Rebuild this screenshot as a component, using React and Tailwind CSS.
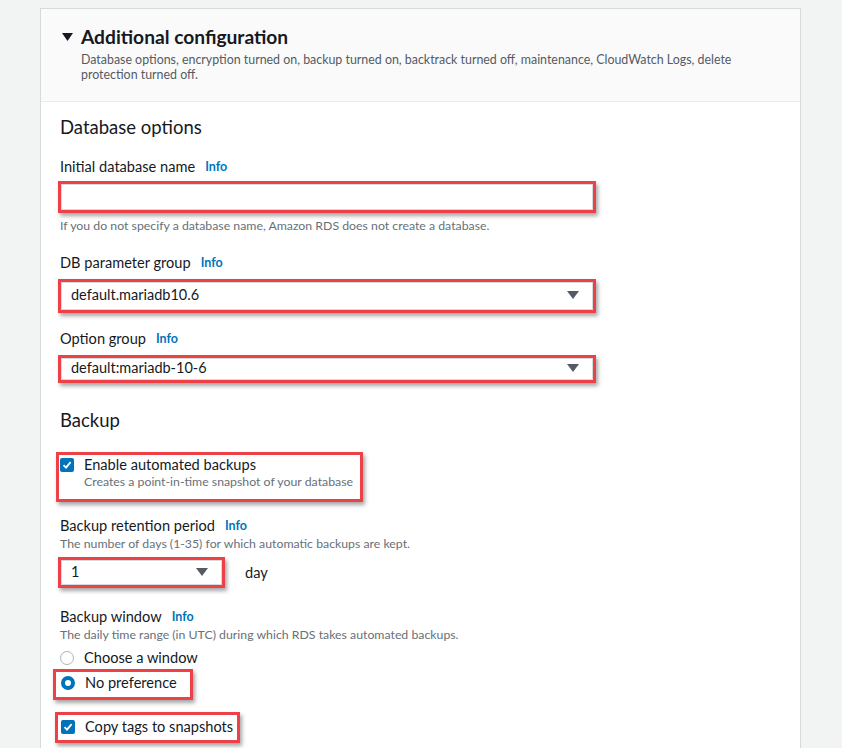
import React from "react";

const RED = "border-[3px] border-[#ee4047] shadow-[2px_3px_4px_rgba(0,0,0,0.35)]";

function Info({ className = "" }) {
  return <span className={"text-[12.5px] font-bold text-[#0073bb] " + className}>Info</span>;
}

function Caret() {
  return (
    <svg width="12" height="8" viewBox="0 0 12 8" className="shrink-0">
      <path d="M0 0 L12 0 L6 8 Z" fill="#545b64" />
    </svg>
  );
}

function Checkbox() {
  return (
    <span className="flex h-[14px] w-[14px] shrink-0 items-center justify-center rounded-[2px] bg-[#0073bb]">
      <svg width="10" height="10" viewBox="0 0 10 10">
        <path d="M1.5 5.2 L4 7.6 L8.6 2.2" fill="none" stroke="white" strokeWidth="1.8" />
      </svg>
    </span>
  );
}

function Radio({ checked }) {
  if (checked) {
    return <span className="h-[14px] w-[14px] shrink-0 rounded-full border-[4px] border-[#0073bb] bg-white" />;
  }
  return <span className="h-[14px] w-[14px] shrink-0 rounded-full border-[1.5px] border-[#aab7b8] bg-white" />;
}

function Select({ value, width, height }) {
  return (
    <div className={"-ml-[2px] " + RED + " " + width + " " + height}>
      <div className="flex h-full items-center justify-between border border-[#d5dbdb] bg-white pb-[2px] pl-[9px] pr-[13px]">
        <span className="text-[14.5px] text-[#16191f]">{value}</span>
        <Caret />
      </div>
    </div>
  );
}

export default function App() {
  return (
    <div className="min-h-[748px] bg-[#f2f3f3] pt-[8px] pl-[40px]" style={{ fontFamily: "Lato, 'Open Sans', sans-serif" }}>
      <div className="h-[740px] w-[761px] border-x border-t border-[#d5dbdb] bg-white">
        {/* header */}
        <div className="h-[93px] border-b border-[#eaeded] bg-[#fafafa] pl-[21px] pt-[16px]">
          <div className="flex items-center gap-[8px]">
            <svg width="11" height="8" viewBox="0 0 11 8">
              <path d="M0 0 L11 0 L5.5 8 Z" fill="#16191f" />
            </svg>
            <span className="text-[19.2px] leading-[24px] font-bold text-[#16191f]">Additional configuration</span>
          </div>
          <p className="ml-[19px] mt-[3px] text-[12.4px] leading-[15px] text-[#545b64]">
            Database options, encryption turned on, backup turned on, backtrack turned off, maintenance, CloudWatch Logs, delete
            <br />
            protection turned off.
          </p>
        </div>

        {/* body */}
        <div className="pl-[19px] pt-[13px] text-[#16191f]">
          <h2 className="text-[18.5px] leading-[24px]">Database options</h2>

          <div className="mt-[18px] flex items-center gap-[10px] text-[14.6px] leading-[20px]">
            Initial database name <Info />
          </div>
          <div className={"mt-[4px] -ml-[2px] h-[32px] w-[538px] " + RED}>
            <div className="h-full border border-[#d5dbdb] bg-white" />
          </div>
          <p className="mt-[5px] text-[12.3px] leading-[16px] text-[#687078]">
            If you do not specify a database name, Amazon RDS does not create a database.
          </p>

          <div className="mt-[19px] flex items-center gap-[10px] text-[14.6px] leading-[20px]">
            DB parameter group <Info />
          </div>
          <div className="mt-[6px]">
            <Select value="default.mariadb10.6" width="w-[538px]" height="h-[34px]" />
          </div>

          <div className="mt-[16px] flex items-center gap-[10px] text-[14.6px] leading-[20px]">
            Option group <Info />
          </div>
          <div className="mt-[6px]">
            <Select value="default:mariadb-10-6" width="w-[538px]" height="h-[28px]" />
          </div>

          <h2 className="mt-[25px] text-[18.5px] leading-[24px]">Backup</h2>

          <div className={"mt-[20px] -ml-[4px] h-[50px] w-[307px] pl-[1px] pt-[1px] " + RED}>
            <div className="flex gap-[10px]">
              <div className="pt-[2px]"><Checkbox /></div>
              <div>
                <div className="text-[14.6px] leading-[17px]">Enable automated backups</div>
                <div className="text-[12.3px] leading-[17px] text-[#687078]">Creates a point-in-time snapshot of your database</div>
              </div>
            </div>
          </div>

          <div className="mt-[14px] flex items-center gap-[10px] text-[14.6px] leading-[20px]">
            Backup retention period <Info />
          </div>
          <p className="text-[12.3px] leading-[16px] text-[#687078]">
            The number of days (1-35) for which automatic backups are kept.
          </p>
          <div className="mt-[5px] flex items-center gap-[20px]">
            <Select value="1" width="w-[167px]" height="h-[31px]" />
            <span className="text-[14.6px]">day</span>
          </div>

          <div className="mt-[19px] flex items-center gap-[10px] text-[14.6px] leading-[20px]">
            Backup window <Info />
          </div>
          <p className="text-[12.3px] leading-[16px] text-[#687078]">
            The daily time range (in UTC) during which RDS takes automated backups.
          </p>
          <div className="mt-[5px] flex items-center gap-[10px] text-[14.6px] leading-[20px]">
            <Radio /> Choose a window
          </div>
          <div className={"mt-[1px] -ml-[7px] flex h-[31px] w-[140px] items-center gap-[10px] pb-[3px] pl-[5px] text-[14.6px] " + RED}>
            <Radio checked /> No preference
          </div>
          <div className={"mt-[12px] -ml-[5px] flex h-[31px] w-[185px] items-center gap-[10px] pb-[2px] pl-[3px] text-[14.6px] " + RED}>
            <Checkbox /> Copy tags to snapshots
          </div>
        </div>
      </div>
    </div>
  );
}
